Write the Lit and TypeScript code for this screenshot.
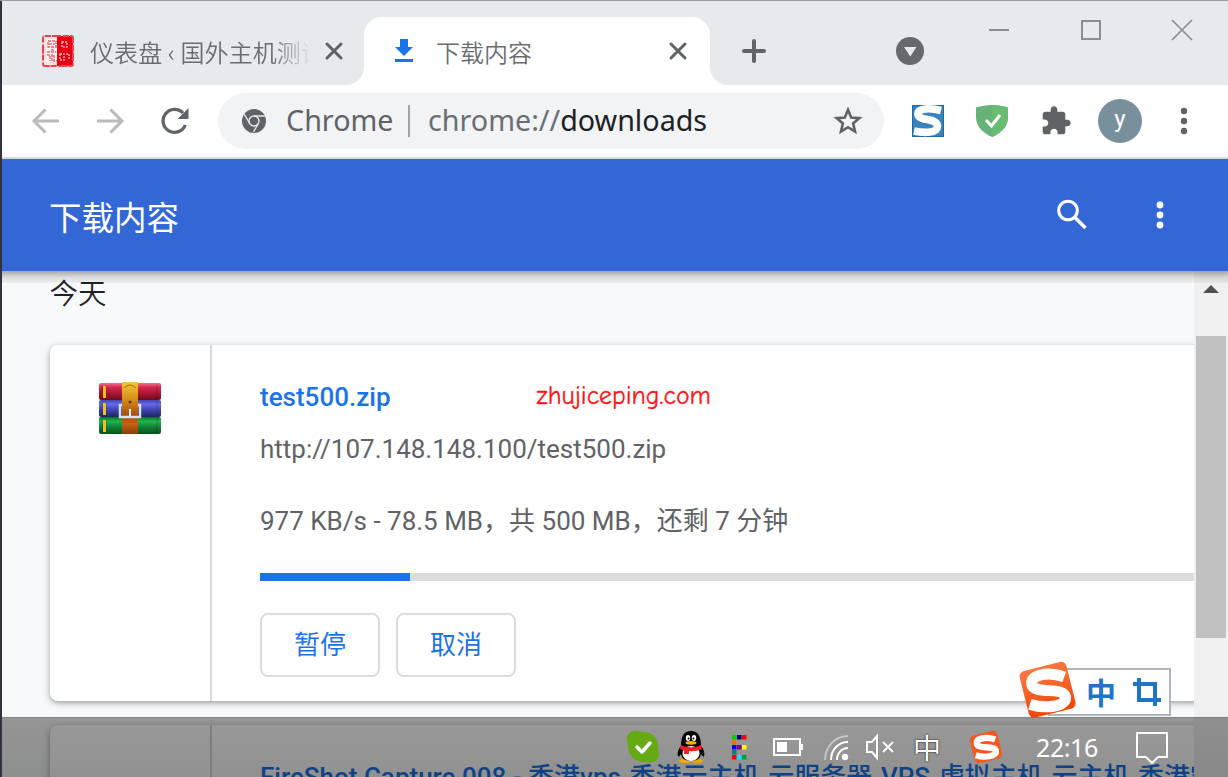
import { LitElement, html, css, svg } from "lit";
import { customElement, property } from "lit/decorators.js";

const swirl = svg`<path d="M37 13.500 C24 9 9.500 11.500 11 19.500 C13 28 36.500 21 38 29.500 C39 38 21 39 9.500 35.500" fill="none" stroke="#fff" stroke-width="8.800"/>`;

@customElement("tab-strip")
class TabStrip extends LitElement {
  static styles = css`
    :host { display: flex; height: 84px; background: #e6eaed; font-family: "Noto Sans CJK SC", sans-serif; color: #6a6d70; }
    svg { display: block; flex: none; }
    .tab { display: flex; align-items: center; height: 68px; padding-top: 0; box-sizing: border-box; }
    .idle { width: 362px; height: 84px; padding: 16px 0 0 39px; background: #e6eaed; border-radius: 0 0 18px 0; }
    .under { background: linear-gradient(#e6eaed 60%, #fff 60%); }
    .active { width: 346px; margin-top: 16px; padding-left: 30px; background: #fff; border-radius: 18px 18px 0 0; }
    .label { font-size: 24px; line-height: 36px; font-weight: 350; white-space: nowrap; overflow: hidden; padding-top: 2px; }
    .idle .label { margin-left: 15px; width: 220px; letter-spacing: 0.1px; -webkit-mask-image: linear-gradient(90deg, #000 182px, transparent 221px); mask-image: linear-gradient(90deg, #000 182px, transparent 221px); }
    .idle .x { margin-left: 14px; }
    .active .label { margin-left: 22px; width: 220px; }
    .active .x { margin-left: 12px; }
    .grow { flex: 1; }
    .rest { display: flex; height: 84px; background: #e6eaed; border-radius: 0 0 0 18px; }
    .plus { margin: 38px 0 0 32px; }
    .drop { margin: 36px 0 0 130px; }
    .controls { display: flex; gap: 69.500px; margin: 18px 0 0 64px; }
  `;
  render() {
    const x = html`<svg class="x" width="20" height="20" viewBox="0 0 20 20"><path d="M3 3 17 17M17 3 3 17" stroke="#5f6368" stroke-width="3" stroke-linecap="round"/></svg>`;
    return html`
      <div class="under"><div class="tab idle">
        <svg width="34" height="34" viewBox="0 0 34 34">
          <rect x="1" y="1" width="32" height="32" fill="#fbdfe1"/>
          <rect x="16" y="2" width="16" height="30" fill="#e60012"/>
          <rect x="2" y="2" width="30" height="30" rx="2" fill="none" stroke="#ea4351" stroke-width="2" stroke-dasharray="6 1 9 2"/>
          <rect x="5" y="5" width="11" height="23" fill="#fff3f3"/>
          <path d="M7 7h8v6H7zM10 13h2v3h-2M6 21h3v6M11 20v8M13 21v6h3M8 10h6M6 18h9" stroke="#ee6570" stroke-width="1.500" fill="none" stroke-dasharray="3 1"/>
          <path d="M21 8h5v5h-5zM19 20h4v6h-4zM25 20h3v6" stroke="#f9aeb4" stroke-width="1.500" fill="none" stroke-dasharray="2 1"/>
        </svg>
        <div class="label">仪表盘 ‹ 国外主机测评</div>${x}
      </div></div>
      <div class="tab active">
        <svg width="20" height="26" viewBox="0 0 20 26"><path d="M6 1h8v8h5l-9 9-9-9h5zM1 21h18v3H1z" fill="#1a73e8"/></svg>
        <div class="label">下载内容</div>${x}
      </div>
      <div class="under grow"><div class="rest">
        <svg class="plus" width="24" height="24"><path d="M12 2v20M2 12h20" stroke="#606367" stroke-width="4" stroke-linecap="round"/></svg>
        <svg class="drop" width="28" height="28"><circle cx="14" cy="14" r="14" fill="#666a6d"/><path d="M8 10h12.500l-6.250 9.500z" fill="#e6eaed"/></svg>
        <div class="controls">
          <svg width="22" height="22"><path d="M1 11h20" stroke="#8b8e91" stroke-width="2"/></svg>
          <svg width="22" height="22"><rect x="2" y="2" width="18" height="18" stroke="#8b8e91" stroke-width="2" fill="none"/></svg>
          <svg width="22" height="22"><path d="M1 1 21 21M21 1 1 21" stroke="#8b8e91" stroke-width="1.700"/></svg>
        </div>
      </div></div>`;
  }
}

@customElement("nav-bar")
class NavBar extends LitElement {
  static styles = css`
    :host { display: flex; align-items: center; height: 72px; background: #fff; border-bottom: 2px solid #d9dbde; font-family: "Noto Sans", sans-serif; }
    svg { display: block; flex: none; }
    .back { margin-left: 29px; }
    .fwd { margin-left: 34px; }
    .reload { margin-left: 35px; }
    .omni { display: flex; align-items: center; width: 666px; height: 56px; margin-left: 28px; border-radius: 28px; background: #f1f3f4; font-size: 28.700px; line-height: 38px; color: #5f6368; white-space: nowrap; }
    .omni .logo { margin-left: 24px; }
    .name, .url { padding-bottom: 2px; }
    .name { margin-left: 20px; width: 107px; }
    .sep { width: 2px; height: 32px; margin: 0 18px 0 15px; background: #9fa2a5; }
    .url { width: 404px; color: #6b6e72; }
    .host { color: #202124; }
    .ext { margin-left: 28px; }
    .shield { margin-left: 31px; }
    .puzzle { margin-left: 31px; }
    .avatar { width: 44px; height: 44px; margin-left: 26px; border-radius: 50%; background: #78909c; color: #fff; font: 24px/40px Roboto, sans-serif; text-align: center; }
    .dots { margin-left: 36px; }
  `;
  render() {
    return html`
      <svg class="back" width="30" height="30"><path d="M28 15H3.500M14.500 3.500 3 15l11.500 11.500" fill="none" stroke="#b9babc" stroke-width="3"/></svg>
      <svg class="fwd" width="30" height="30"><path d="M2 15h24.500M15.500 3.500 27 15 15.500 26.500" fill="none" stroke="#b9babc" stroke-width="3"/></svg>
      <svg class="reload" width="30" height="30"><path d="M25.300 19A11.500 11.500 0 1 1 23 7" fill="none" stroke="#5f6368" stroke-width="3.300"/><path d="M28.500 2v11h-11z" fill="#5f6368"/></svg>
      <div class="omni">
        <svg class="logo" width="24" height="24"><circle cx="12" cy="12" r="12" fill="#5f6368"/><circle cx="12" cy="12" r="5" fill="none" stroke="#e6e8e9" stroke-width="1.400"/><path d="M12 7h11M7.700 14.500 2.100 5M16.300 14.500 11.500 23" stroke="#e6e8e9" stroke-width="1.400"/></svg>
        <div class="name">Chrome</div><div class="sep"></div>
        <div class="url">chrome://<span class="host">downloads</span></div>
        <svg width="32" height="32" viewBox="0 0 32 32"><path d="M16 4.800 19.200 12.500 27.300 13.100 21.100 18.400 23 26.500 16 22.200 9 26.500 10.900 18.400 4.700 13.100 12.800 12.500Z" fill="none" stroke="#5f6368" stroke-width="2.600"/></svg>
      </div>
      <svg class="ext" width="32" height="32" viewBox="0 0 32 32"><rect x=".5" y=".5" width="31" height="31" fill="#3883bd" stroke="#2467a2"/><path d="M29 5.500C19 3 5 2.500 6 9.500c1 7 19 3 19.500 11.500 0 7-12.500 7.500-23.500 5" fill="none" stroke="#fff" stroke-width="7.600"/></svg>
      <svg class="shield" width="34" height="34" viewBox="0 0 34 34"><path d="M1 3.500C11 0 23 0 33 3.500V13c0 10-7 16-16 20C8 29 1 23 1 13z" fill="#67b279"/><path d="M17 1c6 0 11 1 16 2.500V13c0 10-7 16-16 20z" fill="#68bc71"/><path d="m11 16 5.500 6 8.500-11" fill="none" stroke="#fff" stroke-width="3"/></svg>
      <svg class="puzzle" width="32" height="32" viewBox="0 0 24 24"><path d="M20.500 11H19V7c0-1.100-.9-2-2-2h-4V3.500C13 2.120 11.880 1 10.500 1S8 2.120 8 3.500V5H4c-1.100 0-1.990.9-1.990 2v3.800H3.500c1.490 0 2.700 1.210 2.700 2.700s-1.210 2.700-2.700 2.700H2V20c0 1.100.9 2 2 2h3.800v-1.500c0-1.490 1.210-2.700 2.700-2.700 1.490 0 2.700 1.210 2.700 2.700V22H17c1.100 0 2-.9 2-2v-4h1.500c1.380 0 2.500-1.120 2.500-2.500S21.880 11 20.500 11z" fill="#5f6368"/></svg>
      <div class="avatar">y</div>
      <svg class="dots" width="12" height="28"><g fill="#5f6368"><circle cx="6" cy="4" r="3.200"/><circle cx="6" cy="14" r="3.200"/><circle cx="6" cy="24" r="3.200"/></g></svg>`;
  }
}

@customElement("download-card")
class DownloadCard extends LitElement {
  static styles = css`
    :host { display: flex; flex: none; width: 1260px; height: 356px; margin-left: 48px; border-radius: 8px; background: #fff; box-shadow: 0 2px 4px rgba(60,64,67,.32), 0 2px 9px 1px rgba(60,64,67,.18); font-family: Roboto, "Noto Sans CJK SC", sans-serif; }
    .icon { width: 160px; border-right: 2px solid #d8d8d8; flex: none; }
    .icon svg { display: block; margin: 35px 0 0 48px; }
    .body { flex: 1; padding-left: 48px; white-space: nowrap; font-size: 26px; color: #5f6368; }
    .title { display: flex; height: 36px; margin-top: 34px; line-height: 36px; color: #1a73e8; font-weight: 500; }
    .us { letter-spacing: -3px; }
    .mark { margin-left: 146px; color: #fb1414; font: 25.800px/33px "Comic Sans MS", "Comic Neue", cursive; -webkit-text-stroke: 0.3px #fb1414; }
    .src { margin-top: 16px; line-height: 36px; }
    .stat { margin-top: 36px; line-height: 36px; }
    .bar { height: 8px; margin-top: 34px; background: #ddd; }
    .fill { height: 8px; background: #1a73e8; }
    .actions { display: flex; gap: 16px; margin-top: 32px; }
    .btn { width: 120px; height: 64px; box-sizing: border-box; border: 2px solid #dadce0; border-radius: 8px; background: #fff; color: #1a73e8; text-align: center; font-size: 26px; line-height: 60px; font-weight: 400; font-family: Roboto, "Noto Sans CJK SC", sans-serif; padding: 0; }
  `;
  @property({ type: Object }) item: any = {};
  book(y: number, id: string) {
    return svg`<rect x="1" y=${y} width="62" height="17" rx="2" fill="url(#${id})"/><path d="M4 ${y + 3}v12M8 ${y + 3}v12" stroke="#0004" stroke-width="1"/><rect x="5" y=${y + 3} width="3" height="12" fill="#f4bd23"/><path d="M59 ${y + 1}v15" stroke="#0003"/>`;
  }
  render() {
    const i = this.item;
    const parts: string[] = (i.name ?? "").split("_");
    return html`
      <div class="icon">${i.url ? html`<svg width="64" height="56" viewBox="0 0 64 56">
        <defs>
          <linearGradient id="r" x2="0" y2="1"><stop stop-color="#f0718f"/><stop offset=".25" stop-color="#d62850"/><stop offset=".65" stop-color="#a41431"/><stop offset="1" stop-color="#6d0b1d"/></linearGradient>
          <linearGradient id="b" x2="0" y2="1"><stop stop-color="#4048b0"/><stop offset=".25" stop-color="#6668e8"/><stop offset=".6" stop-color="#3d42ae"/><stop offset="1" stop-color="#20255e"/></linearGradient>
          <linearGradient id="g" x2="0" y2="1"><stop stop-color="#087027"/><stop offset=".25" stop-color="#20b64c"/><stop offset=".6" stop-color="#128033"/><stop offset="1" stop-color="#07501b"/></linearGradient>
          <linearGradient id="s" x2="0" y2="1"><stop stop-color="#f3c936"/><stop offset=".35" stop-color="#d48a16"/><stop offset=".65" stop-color="#a64a10"/><stop offset=".8" stop-color="#c7610f"/><stop offset="1" stop-color="#853f0d"/></linearGradient>
        </defs>
        ${this.book(3, "r")}${this.book(20, "b")}${this.book(37, "g")}
        <rect x="24" y="2" width="16" height="52" fill="url(#s)"/>
        <path d="M26 8q6-6 12 0" fill="none" stroke="#a8700c"/><circle cx="32" cy="22" r="1.500" fill="#57300a"/>
        <path d="M24 25h-2v12h20V25h-2" fill="none" stroke="#dce2ea" stroke-width="2.500"/><path d="M32 29v7" stroke="#eef1f5" stroke-width="2"/>
      </svg>` : ""}</div>
      <div class="body">
        <div class="title"><span>${parts.map((p, n) => (n ? html`<span class="us">_</span>${p}` : p))}</span>${i.mark ? html`<span class="mark">${i.mark}</span>` : ""}</div>
        ${i.url ? html`
          <div class="src">${i.url}</div>
          <div class="stat">${i.status}</div>
          <div class="bar"><div class="fill" style="width:${i.done}px"></div></div>
          <div class="actions"><button class="btn">暂停</button><button class="btn">取消</button></div>` : ""}
      </div>`;
  }
}

@customElement("task-bar")
class TaskBar extends LitElement {
  static styles = css`
    :host { display: flex; align-items: center; box-sizing: border-box; height: 60px; padding: 0 0 2px 624px; background: linear-gradient(rgba(0,0,0,.4), rgba(0,0,0,.43)); border-top: 1px solid rgba(0,0,0,.08); color: #fff; }
    svg { display: block; flex: none; }
    .qq { margin-left: 16px; }
    .grid { margin-left: 24px; }
    .batt { margin-left: 24px; }
    .wifi { margin-left: 19px; }
    .vol { margin-left: 16px; }
    .ime { width: 30px; margin-left: 18px; font: 28px/40px "Noto Sans CJK SC", sans-serif; text-shadow: 0 0 2px #222, 0 0 1px #222; }
    .sogou { margin-left: 26px; }
    .clock { width: 64px; margin-left: 33px; font: 25px/36px "Noto Sans", sans-serif; letter-spacing: -0.400px; white-space: nowrap; }
    .note { margin-left: 34px; }
  `;
  render() {
    const cells: [number, number, string][] = [[0,0,"#00d000"],[1,0,"#000080"],[2,0,"#f00"],[0,1,"#ff7000"],[0,2,"#00f"],[1,2,"#800080"],[2,2,"#ff0"],[0,3,"#008080"],[0,4,"#f00"],[1,4,"#20d8ff"],[2,4,"#00a040"]];
    return html`
      <svg width="34" height="34"><path d="M8 1C12 0 15 2 18 2c9 0 15 7 14 16 0 3 2 6 0 10-2 5-8 5-11 4C10 33 2 26 2 16 2 12-1 9 2 5 3 3 5 1 8 1z" fill="#65aa15"/><path d="m11 17 5 5 8-9" fill="none" stroke="#fff" stroke-width="3.500" stroke-linecap="round" stroke-linejoin="round"/></svg>
      <svg class="qq" width="30" height="34" viewBox="0 0 30 34"><ellipse cx="9" cy="31" rx="6" ry="2.200" fill="#f5a800"/><ellipse cx="21" cy="31" rx="6" ry="2.200" fill="#f5a800"/><path d="M5 16C5 6 8 1 15 1s10 5 10 15c3 3 4 8 3 10s-2-1-3-2c-1 5-5 7-10 7s-9-2-10-7c-1 1-2 4-3 2s0-7 3-10z" fill="#050505"/><ellipse cx="15" cy="23.500" rx="8.500" ry="7.500" fill="#fff"/><path d="M5 15c6 3 14 3 20 0l1 4c-7 3-15 3-22 0z" fill="#ed2027"/><path d="M8 19h5v5H8z" fill="#ed2027"/><ellipse cx="12" cy="8" rx="2.200" ry="3" fill="#fff"/><ellipse cx="18" cy="8" rx="2.200" ry="3" fill="#fff"/><circle cx="12.500" cy="8.500" r="1"/><circle cx="17.500" cy="8.500" r="1"/><ellipse cx="15" cy="12.800" rx="5.500" ry="1.900" fill="#f8b000"/></svg>
      <svg class="grid" width="18" height="28">${cells.map(([x, y, c]) => svg`<rect x=${2 + x * 5} y=${2 + y * 5} width="4.500" height="4.500" fill=${c}/>`)}</svg>
      <svg class="batt" width="32" height="20"><rect x="2" y="2" width="26" height="16" fill="none" stroke="#fff" stroke-width="2"/><path d="M5 5h10v10H5zM29 7h2v6h-2z" fill="#fff"/></svg>
      <svg class="wifi" width="26" height="28"><g fill="none" stroke="#fff" stroke-width="2"><path opacity=".45" d="M2 27C2 14 12 3 25 3"/><path d="M8 27C8 17 15 9 25 9M14 27c0-7 5-12 11-12"/></g><circle cx="22" cy="24" r="3.200" fill="#fff"/></svg>
      <svg class="vol" width="30" height="28"><path d="M2 9h5l5-6v22l-5-6H2z" fill="none" stroke="#fff" stroke-width="2"/><path d="m18 9 10 10m0-10L18 19" stroke="#fff" stroke-width="1.800"/></svg>
      <div class="ime">中</div>
      <svg class="sogou" width="34" height="34" viewBox="0 0 48 48"><rect x="4" y="4" width="40" height="40" rx="7" transform="rotate(-14 24 24)" fill="#f4591b"/>${swirl}</svg>
      <div class="clock">22:16</div>
      <svg class="note" width="36" height="36"><path d="M3 4h30v24h-9l-6 6-6-6H3z" fill="none" stroke="#fff" stroke-width="2"/></svg>`;
  }
}

@customElement("app-root")
class AppRoot extends LitElement {
  static styles = css`
    :host { display: block; position: relative; width: 1228px; height: 777px; box-sizing: border-box; overflow: hidden; padding: 1px 0 0 2px; background: linear-gradient(90deg, #34313f 2px, #f8f9fa 2px); }
    .edge { position: absolute; inset: 0 0 auto 0; height: 1px; background: #9a9da1; }
    .head { display: flex; align-items: center; height: 112px; box-sizing: border-box; padding: 0 63px 0 47px; background: #3367d6; color: #fff; font-family: "Noto Sans CJK SC", sans-serif; }
    .head h1 { flex: 1; margin: 0; padding-top: 2px; font-size: 32.500px; line-height: 48px; font-weight: 400; }
    .head svg { display: block; }
    .more { margin-left: 67px; }
    .page { display: flex; height: 506px; background: #f8f9fa; }
    .list { width: 1192px; overflow: hidden; display: flex; flex-direction: column; gap: 24px; }
    .day { flex: none; height: 50px; margin: 0 0 0 47.500px; font: 350 28.500px/42px "Noto Sans CJK SC", sans-serif; color: #202124; }
    .track { width: 34px; background: #f0f0f0; display: flex; flex-direction: column; align-items: center; }
    .arrow { display: block; margin-top: 14px; }
    .thumb { width: 30px; height: 302px; margin-top: 43px; background: #c1c1c1; }
    .shade { position: absolute; left: 2px; right: 0; top: 271px; height: 12px; background: linear-gradient(rgba(0,0,0,.33), rgba(0,0,0,.12) 50%, rgba(0,0,0,.045)); }
    task-bar { position: absolute; left: 2px; right: 0; bottom: 0; }
    .ime { position: absolute; left: 1018px; top: 660px; display: flex; align-items: center; }
    .ime .logo { position: relative; z-index: 1; display: block; }
    .pill { display: flex; align-items: center; box-sizing: border-box; width: 123px; height: 48px; margin: 3px 0 0 -30px; padding-left: 36px; background: #fff; border: 2px solid #b0b4bf; }
    .zh { width: 30px; color: #1f74c7; font: 700 30px/40px "Noto Sans CJK SC", sans-serif; padding-bottom: 2px; }
    .crop { display: block; margin-left: 17px; }
  `;
  items = [
    { name: "test500.zip", mark: "zhujiceping.com", url: "http://107.148.148.100/test500.zip", status: "977 KB/s - 78.5 MB，共 500 MB，还剩 7 分钟", done: 150 },
    { name: "FireShot Capture 008 - 香港vps_香港云主机_云服务器_VPS_虚拟主机_云主机_香港空间" },
  ];
  render() {
    return html`
      <div class="edge"></div>
      <tab-strip></tab-strip>
      <nav-bar></nav-bar>
      <div class="head">
        <h1>下载内容</h1>
        <svg width="32" height="32"><circle cx="12" cy="11.500" r="9.300" fill="none" stroke="#fff" stroke-width="3"/><path d="m18.500 18 11 11" stroke="#fff" stroke-width="3.600"/></svg>
        <svg class="more" width="10" height="28"><g fill="#fff"><circle cx="5" cy="4" r="3.400"/><circle cx="5" cy="14" r="3.400"/><circle cx="5" cy="24" r="3.400"/></g></svg>
      </div>
      <div class="page">
        <div class="list">
          <div class="day">今天</div>
          ${this.items.map((i) => html`<download-card .item=${i}></download-card>`)}
        </div>
        <div class="track"><svg class="arrow" width="16" height="8"><path d="m0 8 8-8 8 8z" fill="#505050"/></svg><div class="thumb"></div></div>
      </div>
      <div class="shade"></div>
      <task-bar></task-bar>
      <div class="ime">
        <svg class="logo" width="60" height="60" viewBox="0 0 48 48"><defs><linearGradient id="o" x2="0" y2="1"><stop stop-color="#fb7742"/><stop offset="1" stop-color="#ef4606"/></linearGradient></defs><rect x="4.500" y="4.500" width="38.500" height="38.500" rx="4.500" transform="rotate(-14 24 24)" fill="url(#o)"/>${swirl}</svg>
        <div class="pill"><div class="zh">中</div><svg class="crop" width="28" height="28"><path d="M0 6h22v22M6 0v22h22" fill="none" stroke="#1f74c7" stroke-width="4"/></svg></div>
      </div>`;
  }
}
